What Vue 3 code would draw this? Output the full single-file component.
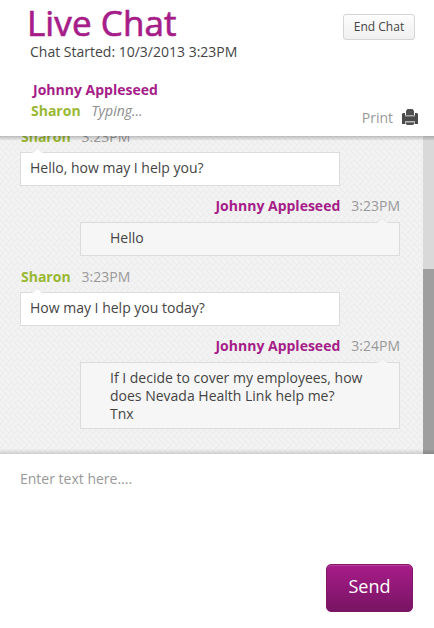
<script setup>
import { ref, reactive, onMounted } from "vue";

const startedAt = "10/3/2013 3:23PM";
const draft = ref("");
const log = ref(null);

const messages = reactive([
  { from: "agent", name: "Sharon", time: "3:23PM", lines: ["Hello, how may I help you?"] },
  { from: "visitor", name: "Johnny Appleseed", time: "3:23PM", lines: ["Hello"] },
  { from: "agent", name: "Sharon", time: "3:23PM", lines: ["How may I help you today?"] },
  {
    from: "visitor",
    name: "Johnny Appleseed",
    time: "3:24PM",
    lines: ["If I decide to cover my employees, how does Nevada Health Link help me?", "Tnx"],
  },
]);

function scrollToEnd() {
  log.value.scrollTop = log.value.scrollHeight;
}

function send() {
  const text = draft.value.trim();
  if (!text) return;
  messages.push({ from: "visitor", name: "Johnny Appleseed", time: "3:24PM", lines: text.split("\n") });
  draft.value = "";
  setTimeout(scrollToEnd);
}

onMounted(scrollToEnd);
</script>

<template>
  <div class="chat">
    <header class="chat-header">
      <div class="info">
        <h1>Live Chat</h1>
        <div class="started">Chat Started: {{ startedAt }}</div>
        <div class="people">
          <div class="visitor-name">Johnny Appleseed</div>
          <div><span class="agent-name">Sharon</span><em>Typing...</em></div>
        </div>
      </div>
      <div class="actions">
        <button class="end-chat">End Chat</button>
        <div class="print">
          <span>Print</span>
          <svg width="16" height="16" viewBox="0 0 16 16">
            <path d="M0 5l1-1h2v2h10V4h2l1 1v10H0z" fill="#4b4b4b" />
            <path d="M3 6h10v1.500H3z" fill="#a8a8a8" />
            <path d="M4 6V2L5.500 0h5L12 2v4z" fill="#505050" />
            <path d="M3 12h10v3H3z" fill="#b8b8b8" />
            <path d="M4 13.500h8V15l-1 1H5l-1-1z" fill="#505050" />
          </svg>
        </div>
      </div>
    </header>

    <div class="chat-body">
      <div ref="log" class="log">
        <div v-for="(msg, i) in messages" :key="i" class="message" :class="msg.from">
          <div class="meta">
            <span class="author">{{ msg.name }}</span>
            <span class="time">{{ msg.time }}</span>
          </div>
          <div class="bubble">
            <svg class="tip" width="11" height="6" viewBox="0 0 11 6">
              <path class="tip-fill" d="M0 6V5L5.500 0.500L11 5v1z" />
              <path class="tip-line" d="M0.500 4.800L5.500 0.500L10.500 4.800" />
            </svg>
            <div v-for="(line, n) in msg.lines" :key="n">{{ line }}</div>
          </div>
        </div>
      </div>
      <div class="scrollbar"><div class="thumb"></div></div>
    </div>

    <footer class="composer">
      <textarea v-model="draft" placeholder="Enter text here...."></textarea>
      <button class="send" @click="send">Send</button>
    </footer>
  </div>
</template>

<style>
body {
  margin: 0;
  background: #fff;
}
</style>

<style scoped>
.chat {
  display: flex;
  flex-direction: column;
  width: 434px;
  height: 628px;
  overflow: hidden;
  font-family: "Open Sans", "Noto Sans", sans-serif;
  font-size: 14px;
  line-height: 18px;
  color: #444;
  background: #fff;
}

button {
  font-family: inherit;
  cursor: pointer;
  box-sizing: border-box;
}

.chat-header {
  display: flex;
  justify-content: space-between;
  box-sizing: border-box;
  height: 136px;
  padding: 0 15px 0 27px;
}

h1 {
  margin: 0;
  font-size: 35px;
  line-height: 46px;
  font-weight: 500;
  letter-spacing: 0.1px;
  color: #a61c88;
  -webkit-text-stroke: 0.7px #a61c88;
}

.started {
  margin: -4px 0 0 3px;
  line-height: 20px;
}

.people {
  margin: 17px 0 0 4px;
  line-height: 21px;
}

.visitor-name,
.message.visitor .author {
  font-weight: 700;
  color: #a61c88;
}

.agent-name,
.message.agent .author {
  font-weight: 700;
  color: #99b832;
}

.visitor-name {
  padding-left: 2px;
}

.people em {
  margin-left: 11px;
  color: #8c8c8c;
}

.actions {
  display: flex;
  flex-direction: column;
  justify-content: space-between;
  align-items: flex-end;
  padding: 14px 0 9px;
}

.end-chat {
  width: 72px;
  height: 26px;
  padding: 0 0 1px;
  margin-right: 4px;
  border: 1px solid #d5d5d5;
  border-radius: 3px;
  font-size: 12px;
  color: #444;
  background: linear-gradient(#fdfdfd, #f0f0f0);
}

.print {
  display: flex;
  align-items: center;
  gap: 9px;
  margin-right: 1px;
  color: #999;
}

.print svg {
  margin-top: -2px;
}

/* herringbone tile */
.chat-body {
  position: relative;
  display: flex;
  height: 318px;
  background: #f2f2f2 url("data:image/svg+xml,%3Csvg xmlns='http://www.w3.org/2000/svg' width='6' height='12'%3E%3Cpath d='M0 0L6 6M3 3L6 0M0 6L3 9L6 6M3 9L0 12' fill='none' stroke='%23eaeaea' stroke-width='.8'/%3E%3C/svg%3E");
}

/* inner shadows over the scrolled messages */
.chat-body::before,
.chat-body::after {
  content: "";
  position: absolute;
  left: 0;
  right: 0;
  height: 5px;
  pointer-events: none;
}

.chat-body::before {
  top: 0;
  background: linear-gradient(rgba(0, 0, 0, 0.22), rgba(0, 0, 0, 0));
}

.chat-body::after {
  bottom: 0;
  background: linear-gradient(rgba(0, 0, 0, 0), rgba(0, 0, 0, 0.15));
}

.log {
  flex: 1;
  overflow: hidden;
  padding: 0 23px 25px 20px;
}

.message {
  margin-bottom: 10px;
}

.message:last-child {
  margin-bottom: 0;
}

.meta {
  display: flex;
  gap: 11px;
  height: 26px;
  padding: 0 0 0 1px;
  line-height: 20px;
}

.message.agent .meta {
  line-height: 22px;
}

.message.visitor .meta {
  justify-content: flex-end;
}

.time {
  color: #999;
}

.bubble {
  position: relative;
  box-sizing: border-box;
  width: 320px;
  min-height: 34px;
  padding: 6px 9px 5px;
  border: 1px solid #dcdcdc;
  background: #fff;
}

.message.visitor .bubble {
  margin-left: auto;
  padding-left: 29px;
  padding-right: 29px;
  background: #f6f6f6;
}

.tip {
  position: absolute;
  top: -5px;
  left: 11px;
}

.message.visitor .tip {
  left: auto;
  right: 11px;
}

.tip-fill {
  fill: #fff;
}

.tip-line {
  fill: none;
  stroke: #e4e4e4;
  stroke-width: 0.8;
}

.message.visitor .tip-fill {
  fill: #f6f6f6;
}

.scrollbar {
  display: flex;
  align-items: flex-end;
  width: 11px;
  background: #d9d9d9;
}

.thumb {
  width: 100%;
  height: 185px;
  background: #9f9f9f;
}

.composer {
  display: flex;
  flex-direction: column;
  align-items: flex-end;
  box-sizing: border-box;
  height: 174px;
  padding: 15px 21px 16px 20px;
}

textarea {
  flex: 1;
  width: 100%;
  padding: 0;
  border: 0;
  outline: 0;
  resize: none;
  font: inherit;
  line-height: 20px;
  color: #444;
  background: none;
}

textarea::placeholder {
  color: #999;
  opacity: 1;
}

.send {
  width: 87px;
  height: 48px;
  padding: 0 0 4px;
  border: 1px solid #7f1768;
  border-radius: 5px;
  font-size: 18px;
  color: #fff;
  background: linear-gradient(#a81c89, #781463);
  box-shadow: inset 0 1px 0 #b9419f;
}
</style>
